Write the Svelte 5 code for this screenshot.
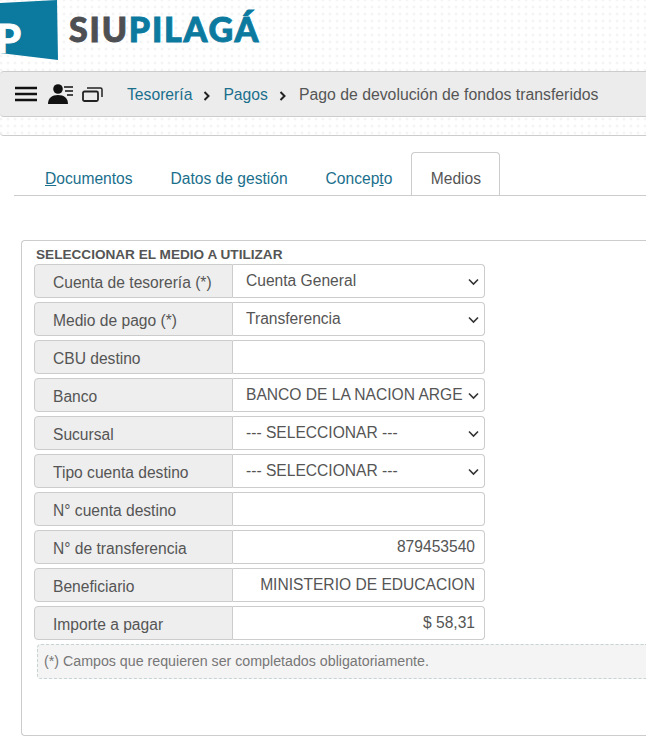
<script>
  const rows = [
    { label: 'Cuenta de tesorería (*)', kind: 'select', value: 'Cuenta General' },
    { label: 'Medio de pago (*)', kind: 'select', value: 'Transferencia' },
    { label: 'CBU destino', kind: 'input', value: '' },
    { label: 'Banco', kind: 'select', value: 'BANCO DE LA NACION ARGENTINA' },
    { label: 'Sucursal', kind: 'select', value: '--- SELECCIONAR ---' },
    { label: 'Tipo cuenta destino', kind: 'select', value: '--- SELECCIONAR ---' },
    { label: 'N° cuenta destino', kind: 'input', value: '' },
    { label: 'N° de transferencia', kind: 'input', value: '879453540' },
    { label: 'Beneficiario', kind: 'input', value: 'MINISTERIO DE EDUCACION' },
    { label: 'Importe a pagar', kind: 'input', value: '$ 58,31' }
  ];
</script>

<div class="page">
  <header class="top">
    <div class="logo">
      <div class="mark"><span class="mark-p">P</span></div>
      <div class="word"><span class="siu">SIU</span><span class="pil">PILAGÁ</span></div>
    </div>
    <nav class="bar">
      <div class="icons">
        <svg width="22" height="16" viewBox="0 0 22 16"><path d="M0 2h22M0 8h22M0 14h22" stroke="#111" stroke-width="2.4" fill="none"/></svg>
        <svg class="person" width="25" height="20" viewBox="0 0 25 20"><circle cx="10" cy="5" r="4.8" fill="#111"/><path d="M0 20c0-6 4-9 10-9s10 3 10 9z" fill="#111"/><path d="M16 3h9M17 7h8M19 11h6" stroke="#111" stroke-width="1.600" fill="none"/></svg>
        <svg width="21" height="15" viewBox="0 0 21 15"><rect x="1" y="4.500" width="15" height="9.500" rx="1.500" fill="none" stroke="#222" stroke-width="1.800"/><path d="M5 1h13.500a1.500 1.500 0 0 1 1.500 1.500V10" fill="none" stroke="#222" stroke-width="1.500"/></svg>
      </div>
      <a class="crumb first">Tesorería</a>
      <svg class="sep" width="8" height="10" viewBox="0 0 8 10"><path d="M1.500 1l4 4-4 4" fill="none" stroke="#222" stroke-width="2"/></svg>
      <a class="crumb">Pagos</a>
      <svg class="sep" width="8" height="10" viewBox="0 0 8 10"><path d="M1.500 1l4 4-4 4" fill="none" stroke="#222" stroke-width="2"/></svg>
      <span class="current">Pago de devolución de fondos transferidos</span>
    </nav>
  </header>

  <main class="content">
    <div class="tabs">
      <a class="tab doc"><u>D</u>ocumentos</a>
      <a class="tab">Datos de gestión</a>
      <a class="tab">Concep<u>t</u>o</a>
      <a class="tab active">Medios</a>
    </div>

    <section class="panel">
      <h3>SELECCIONAR EL MEDIO A UTILIZAR</h3>
      <div class="rows">
        {#each rows as r}
          <div class="row">
            <div class="label">{r.label}</div>
            {#if r.kind === 'select'}
              <div class="field select">
                <span class="val">{r.value}</span>
                <svg class="chev" width="11" height="8" viewBox="0 0 11 8"><path d="M1 1.500l4.500 4.500 4.500-4.500" fill="none" stroke="#333" stroke-width="1.600"/></svg>
              </div>
            {:else}
              <div class="field text">{r.value}</div>
            {/if}
          </div>
        {/each}
      </div>
      <div class="note">(*) Campos que requieren ser completados obligatoriamente.</div>
    </section>
  </main>
</div>

<style>
  :global(body) { margin: 0; background: #fff; }
  .page { width: 646px; height: 736px; overflow: hidden; font-family: "Liberation Sans", Arial, sans-serif; color: #555; }
  .top {
    height: 136px; box-sizing: border-box; border-bottom: 1px solid #ccc;
    border-radius: 0 0 0 4px;
    background-color: #fff;
    background-image: radial-gradient(#ebebeb 0.9px, transparent 1.200px);
    background-size: 7px 7px;
    background-position: -2.500px -3.500px;
  }
  .logo { height: 71px; display: flex; align-items: flex-start; }
  .mark {
    width: 58px; height: 61px; background: #0c7a9f; flex: none; overflow: hidden;
    clip-path: polygon(0 3px, 57px 0, 58px 60px, 0 53px);
    display: flex; align-items: flex-end;
  }
  .mark-p { font: 900 40px/1 Lato, sans-serif; color: #fff; -webkit-text-stroke: 0.8px #fff; margin: 0 0 3px -4px; }
  .word { margin: 7px 0 0 11px; font: 900 34px/44px Lato, sans-serif; letter-spacing: 1.800px; -webkit-text-stroke: 0.9px; }
  .siu { color: #4d4f53; }
  .pil { color: #0c7a9f; }
  .bar {
    height: 46px; box-sizing: border-box; background: #ececec;
    border-top: 1px solid #ccc; border-bottom: 1px solid #ccc;
    display: flex; align-items: center; font-size: 15.700px; padding-left: 15px;
    border-radius: 4px 0 0 4px;
  }
  .icons { display: flex; align-items: center; gap: 10px; width: 112px; }
  .person { margin-left: 1px; margin-right: -1px; }
  .crumb, .current { padding-top: 2px; }
  .crumb { color: #1a6f8c; }
  .sep { margin: 3px 12px 0 11px; }
  .current { color: #555; font-size: 15.800px; }
  .content { padding: 0 0 0 14px; height: 600px; }
  .tabs { margin-top: 16px; height: 43px; display: flex; align-items: stretch; border-bottom: 1px solid #ccc; }
  .tab { font-size: 15.600px; line-height: 18px; color: #1a6f8c; padding: 18px 19px 0; box-sizing: border-box; white-space: nowrap; }
  .tab.doc { padding-left: 31px; }
  .tab.active { color: #555; background: #fff; width: 89px; height: 43px; padding: 17px 0 0; text-align: center; border: 1px solid #ccc; border-bottom: 0; border-radius: 4px 4px 0 0; }
  .panel {
    margin: 44px 0 0 7px; height: 496px; box-sizing: border-box;
    border: 1px solid #ccc; border-right: 0; border-radius: 4px 0 0 4px; padding: 5px 0 0 12px;
  }
  h3 { margin: 0; font-size: 13.600px; line-height: 17px; font-weight: 700; color: #555; padding-left: 2px; white-space: nowrap; }
  .rows { display: flex; flex-direction: column; gap: 4px; margin-top: 1px; }
  .row { display: flex; height: 34px; }
  .label {
    width: 199px; box-sizing: border-box; background: #eee; border: 1px solid #ccc;
    border-radius: 4px 0 0 4px; font-size: 15.600px; padding: 9px 0 0 18px; line-height: 18px; color: #555;
  }
  .field {
    width: 252px; box-sizing: border-box; background: #fff; border: 1px solid #ccc; border-left: 0;
    border-radius: 0 4px 4px 0; font-size: 15.600px; line-height: 18px; color: #555; position: relative;
  }
  .select { padding: 7px 0 0 13px; }
  .val { display: block; width: 217px; white-space: nowrap; overflow: hidden; }
  .chev { position: absolute; right: 5px; top: 13px; }
  .text { text-align: right; padding: 7px 9px 0 0; }
  .note {
    margin: 4px 0 0 3px; height: 35px; box-sizing: border-box; background: #f4f4f4;
    border: 1px dashed #c5d3d3; border-right: 0; border-radius: 4px 0 0 4px;
    font-size: 14.220px; line-height: 32px; padding-left: 6px; color: #777; white-space: nowrap;
  }
</style>
